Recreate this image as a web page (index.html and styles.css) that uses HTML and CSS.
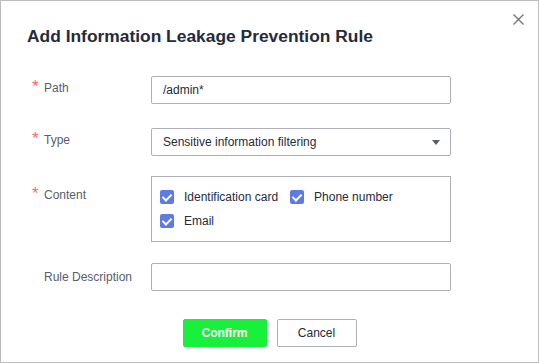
FILE: index.html
```html
<!DOCTYPE html>
<html lang="en">

<head>
    <meta charset="UTF-8">
    <meta name="viewport" content="width=device-width, initial-scale=1.0">
    <title>Add Information Leakage Prevention Rule</title>
    <link rel="stylesheet" href="styles.css">
</head>

<body class="body">
    <div class="dialog">
        <div class="header">
            <h3 class="title">Add Information Leakage Prevention Rule</h3>
            <button class="close" aria-label="Close">
                <svg width="11" height="11" viewBox="0 0 11 11">
                    <path d="M0.5 0.5 L10.5 10.5 M10.5 0.5 L0.5 10.5" stroke="#71757f" stroke-width="1.4" fill="none" />
                </svg>
            </button>
        </div>
        <form class="form">
            <div class="item item-path">
                <label class="label required">Path</label>
                <input class="input" type="text" value="/admin*">
            </div>
            <div class="item item-type">
                <label class="label required">Type</label>
                <div class="select">
                    <span>Sensitive information filtering</span>
                    <span class="caret"></span>
                </div>
            </div>
            <div class="item item-content">
                <label class="label label-top required">Content</label>
                <div class="checks">
                    <label class="check"><span class="box"></span>Identification card</label>
                    <label class="check"><span class="box"></span>Phone number</label>
                    <label class="check"><span class="box"></span>Email</label>
                </div>
            </div>
            <div class="item item-desc">
                <label class="label">Rule Description</label>
                <input class="input" type="text">
            </div>
        </form>
        <div class="footer">
            <button class="button primary">Confirm</button>
            <button class="button">Cancel</button>
        </div>
    </div>
</body>

</html>
```

FILE: styles.css
```css
.body {
    margin: 0;
    font-family: 'Liberation Sans', Arial, sans-serif;
    font-size: 12px;
    color: #252b3a;
    background: #fff;
}

.dialog {
    box-sizing: border-box;
    width: 539px;
    height: 363px;
    border: 1px solid #bcbcbc;
    background: #fff;
}

.header {
    display: flex;
    justify-content: space-between;
    align-items: flex-start;
    padding: 0 14px 0 26px;
}

.title {
    margin: 24px 0 0;
    font-size: 17.4px;
    line-height: 22px;
    font-weight: bold;
    color: #252b3a;
}

.close {
    margin-top: 13px;
    padding: 0;
    border: none;
    background: none;
    width: 11px;
    height: 11px;
    cursor: pointer;
    display: flex;
}

.form {
    padding: 29px 0 0 30px;
}

.item {
    display: flex;
    align-items: flex-start;
}

.item-path,
.item-type {
    margin-bottom: 24px;
}

.item-type {
    margin-bottom: 20px;
}

.item-content {
    margin-bottom: 21px;
}

.label {
    width: 120px;
    padding-left: 13px;
    box-sizing: border-box;
    line-height: 24px;
    color: #575d6c;
    position: relative;
}

.item-desc .label {
    line-height: 28px;
}

.label-top {
    padding-top: 7px;
}

.required::before {
    content: "*";
    position: absolute;
    left: 1px;
    top: 2px;
    color: #f66f6a;
    font-size: 17px;
    line-height: 17px;
}

.label-top.required::before {
    top: 9px;
}

.input,
.select {
    box-sizing: border-box;
    width: 300px;
    height: 28px;
    border: 1px solid #adb0b8;
    border-radius: 2px;
    padding: 0 11px;
    font: inherit;
    color: #252b3a;
    background: #fff;
}

.select {
    display: flex;
    align-items: center;
    justify-content: space-between;
    padding-right: 10px;
}

.caret {
    width: 0;
    height: 0;
    border-left: 4px solid transparent;
    border-right: 4px solid transparent;
    border-top: 5px solid #575d6c;
}

.checks {
    box-sizing: border-box;
    width: 300px;
    height: 66px;
    border: 1px solid #adb0b8;
    padding: 12px 8px 0;
    display: flex;
    flex-wrap: wrap;
    align-content: flex-start;
    column-gap: 12px;
    row-gap: 8px;
}

.check {
    display: flex;
    align-items: center;
    height: 16px;
    color: #252b3a;
}

.box {
    width: 14px;
    height: 14px;
    margin-right: 10px;
    border-radius: 2px;
    background: #5e7ce0;
    position: relative;
}

.box::after {
    content: "";
    position: absolute;
    left: 4px;
    top: 2px;
    width: 4px;
    height: 7px;
    border-right: 2px solid #fff;
    border-bottom: 2px solid #fff;
    transform: rotate(45deg);
}

.footer {
    display: flex;
    justify-content: center;
    gap: 10px;
    margin-top: 28px;
}

.button {
    box-sizing: border-box;
    height: 28px;
    min-width: 80px;
    padding: 0 16px;
    border: 1px solid #adb0b8;
    border-radius: 2px;
    background: #fff;
    color: #252b3a;
    font: inherit;
    cursor: pointer;
}

.button.primary {
    min-width: 84px;
    border-color: #18f03c;
    background: #18f03c;
    color: #fff;
    font-weight: bold;
}
```
